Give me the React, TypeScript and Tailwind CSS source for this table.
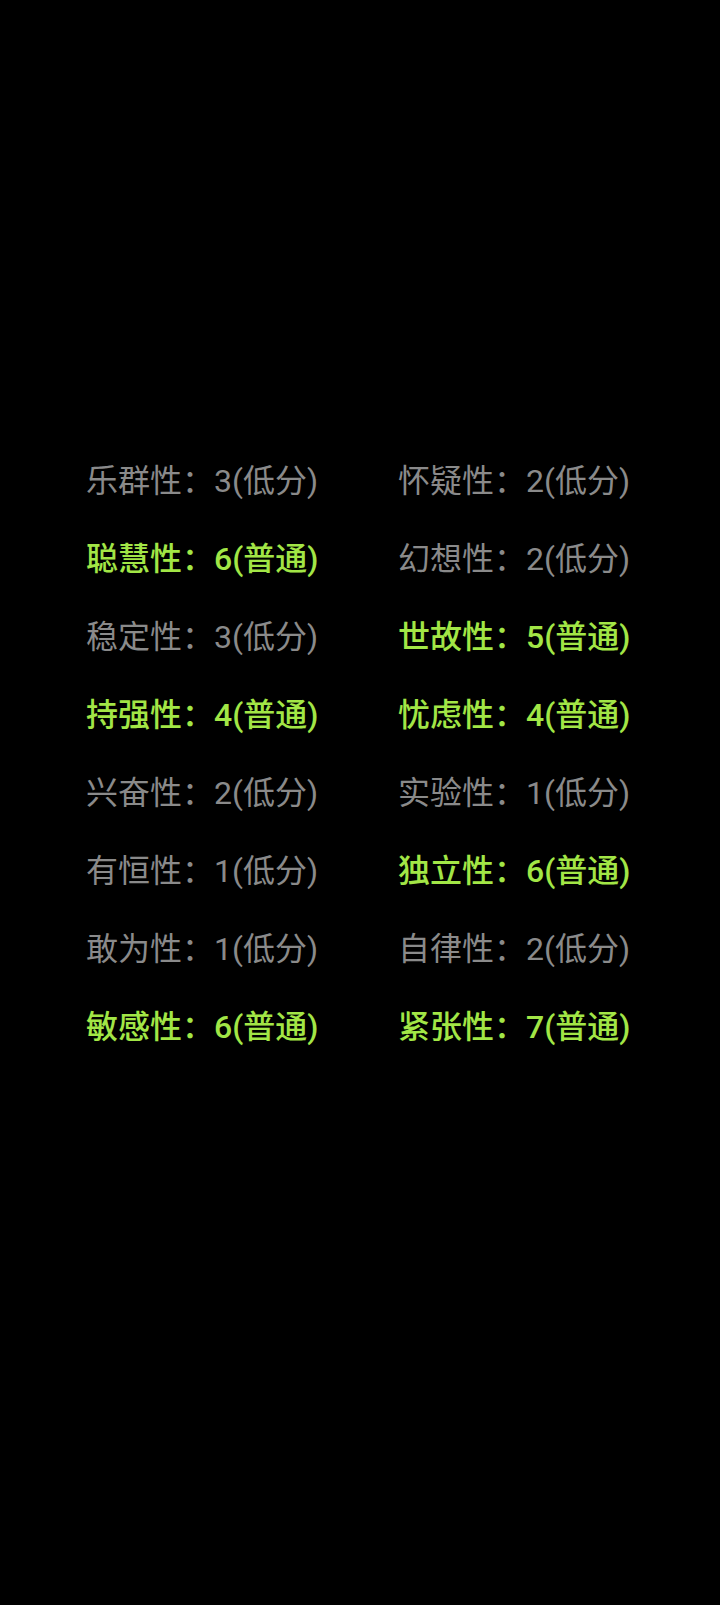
import React from "react";

const rows: [string, string, boolean][] = [
  ["乐群性", "3(低分)", false],
  ["怀疑性", "2(低分)", false],
  ["聪慧性", "6(普通)", true],
  ["幻想性", "2(低分)", false],
  ["稳定性", "3(低分)", false],
  ["世故性", "5(普通)", true],
  ["持强性", "4(普通)", true],
  ["忧虑性", "4(普通)", true],
  ["兴奋性", "2(低分)", false],
  ["实验性", "1(低分)", false],
  ["有恒性", "1(低分)", false],
  ["独立性", "6(普通)", true],
  ["敢为性", "1(低分)", false],
  ["自律性", "2(低分)", false],
  ["敏感性", "6(普通)", true],
  ["紧张性", "7(普通)", true],
];

export default function App() {
  return (
    <div
      className="w-[720px] h-[1605px] bg-black pt-[442px] pl-[86px]"
      style={{ fontFamily: "Roboto, 'Noto Sans CJK SC', sans-serif" }}
    >
      <div className="grid grid-cols-[312px_300px]">
        {rows.map(([k, v, hi], i) => (
          <div
            key={i}
            className={
              "h-[78px] flex items-center text-[32px] leading-none whitespace-nowrap " +
              (hi ? "text-[#a2e646] font-medium" : "text-[#8a8a8a]")
            }
          >
            {k}：{v}
          </div>
        ))}
      </div>
    </div>
  );
}
